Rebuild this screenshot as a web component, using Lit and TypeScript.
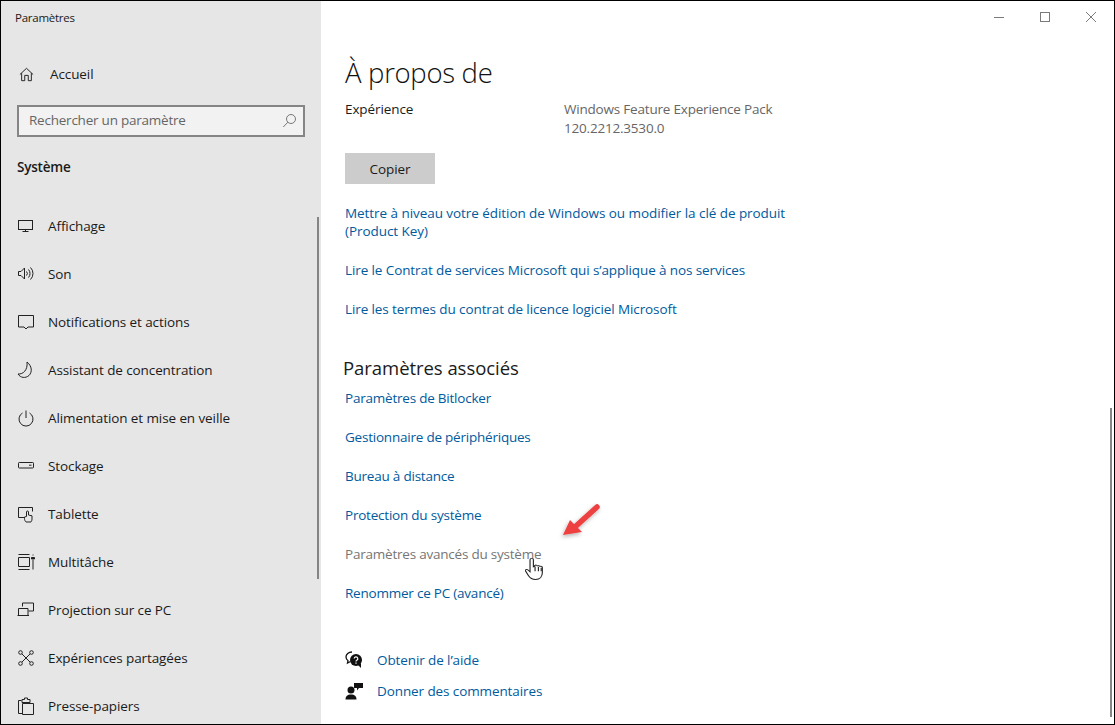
import { LitElement, html, css, svg } from "lit";
import { customElement } from "lit/decorators.js";

const navIcons: Record<string, unknown> = {
  monitor: svg`<rect x="1.500" y="3.500" width="14" height="9"/><path d="M8.500 12.500v2M5.500 14.500h6"/>`,
  sound: svg`<path d="M1.500 6.500h2.500l3.500-3.500v11l-3.500-3.500h-2.500z"/><path d="M9.500 6.500a3 3 0 0 1 0 4M11.500 4.500a6 6 0 0 1 0 8M13.500 2.500a8.500 8.500 0 0 1 0 12"/>`,
  note: svg`<path d="M1.500 2.500h15v11.500h-5.500l-2 2-2-2h-5.500z"/>`,
  moon: svg`<path d="M10 1C15 5 15.500 11 12 14.500C8.500 17.500 3.500 17 1 13C6 13.500 11 9 10 1z"/>`,
  power: svg`<path d="M5.500 4a7 7 0 1 0 7 0M9 1.500v7.500"/>`,
  storage: svg`<rect x="1.500" y="5.500" width="15" height="5.500" rx="0.800"/><path d="M12 8.200h2.500"/>`,
  tablet: svg`<path d="M8 12.500h-6.500v-10h14v4"/><path d="M9 17c-1-1-1.500-2-1.500-3.500v-1.500l2-.5v-4.500a1 1 0 0 1 2 0v3l3.500.8v3.200c0 1.500-.5 2-1 3z"/>`,
  multi: svg`<path d="M1.500 1.500h11M1.500 16.500h11M1.500 4.500v9h11v-9zM16 1.500v1M16 7v9.500"/><path d="M14.500 4.500h3v1.500h-3z" fill="currentColor"/>`,
  project: svg`<path d="M5.500 5.500v-3.500h11v8h-5"/><path d="M1.500 14.500v-7h9.500v7M.5 14.500h11.500"/>`,
  shared: svg`<circle cx="3.500" cy="3.500" r="1.800"/><circle cx="14.500" cy="3.500" r="1.800"/><circle cx="3.500" cy="14.500" r="1.800"/><circle cx="14.500" cy="14.500" r="1.800"/><path d="M5 5l8 8M13 5l-8 8"/>`,
  clip: svg`<path d="M4.500 3.500h-3v13h4M5 2.500h2.500v-1.500h3v1.500h2.500v3h-8z"/><path d="M5.500 6.500h11v11h-11z"/>`,
};

const nav: [string, string][] = [
  ["monitor", "Affichage"],
  ["sound", "Son"],
  ["note", "Notifications et actions"],
  ["moon", "Assistant de concentration"],
  ["power", "Alimentation et mise en veille"],
  ["storage", "Stockage"],
  ["tablet", "Tablette"],
  ["multi", "Multitâche"],
  ["project", "Projection sur ce PC"],
  ["shared", "Expériences partagées"],
  ["clip", "Presse-papiers"],
];

const related: [string, boolean][] = [
  ["Paramètres de Bitlocker", false],
  ["Gestionnaire de périphériques", false],
  ["Bureau à distance", false],
  ["Protection du système", false],
  ["Paramètres avancés du système", true],
  ["Renommer ce PC (avancé)", false],
];

@customElement("app-root")
export class AppRoot extends LitElement {
  static styles = css`
    :host {
      display: block;
      width: 1115px;
      height: 725px;
      background: #fff;
      font-family: "Open Sans", "Noto Sans", sans-serif;
      font-size: 13.500px;
      letter-spacing: -0.100px;
      color: #1a1a1a;
    }
    .window {
      position: relative;
      box-sizing: border-box;
      width: 1115px;
      height: 725px;
      border: 1px solid #000;
      display: flex;
      overflow: hidden;
      background: #fff;
    }
    .side {
      width: 320px;
      flex: none;
      background: #e6e6e6;
      display: flex;
      flex-direction: column;
      position: relative;
      overflow: hidden;
    }
    .side > * {
      flex: none;
    }
    .app-title {
      font-size: 11.500px;
      line-height: 16px;
      margin: 9px 0 0 14px;
      letter-spacing: -0.250px;
    }
    .home {
      display: flex;
      align-items: center;
      height: 24px;
      margin: 36px 0 0 18px;
      gap: 16px;
    }
    .home svg {
      width: 15px;
      height: 15px;
      fill: none;
      stroke: #222;
      stroke-width: 1.100;
    }
    .search {
      box-sizing: border-box;
      width: 288px;
      height: 32px;
      margin: 19px 0 0 16px;
      border: 2px solid #858585;
      background: #f2f2f2;
      display: flex;
      align-items: center;
      justify-content: space-between;
      padding: 0 6px 2px 10px;
      color: #666;
      letter-spacing: -0.230px;
    }
    .search svg {
      width: 15px;
      height: 15px;
      fill: none;
      stroke: #777;
      stroke-width: 1;
    }
    .section {
      font-weight: 600;
      line-height: 20px;
      margin: 20px 0 0 16px;
      letter-spacing: -0.200px;
    }
    .nav {
      margin-top: 25px;
      display: flex;
      flex-direction: column;
    }
    .nav-item {
      height: 48px;
      flex: none;
      display: flex;
      align-items: center;
      padding-left: 16px;
      gap: 13px;
    }
    .nav-item svg {
      width: 18px;
      height: 18px;
      flex: none;
      fill: none;
      stroke: #222;
      stroke-width: 1;
    }
    .side-scroll {
      position: absolute;
      left: 316px;
      top: 216px;
      width: 2px;
      height: 362px;
      background: #858585;
    }
    .main {
      flex: 1;
      position: relative;
      padding-left: 24px;
      min-width: 0;
    }
    .controls {
      position: absolute;
      top: 0;
      right: 0;
      display: flex;
    }
    .controls span {
      width: 46px;
      height: 32px;
      display: flex;
      align-items: center;
      justify-content: center;
    }
    .controls svg {
      width: 12px;
      height: 12px;
      fill: none;
      stroke: #7a7a7a;
      stroke-width: 1;
    }
    h1 {
      margin: 52px 0 0;
      font-size: 27.500px;
      font-weight: 300;
      line-height: 40px;
      letter-spacing: -0.300px;
      color: #111;
    }
    .info {
      display: flex;
      margin-top: 7px;
      line-height: 19px;
    }
    .info .key {
      width: 219px;
    }
    .info .val {
      color: #666;
      letter-spacing: -0.200px;
    }
    button {
      display: block;
      width: 90px;
      height: 31px;
      margin-top: 15px;
      border: none;
      background: #cccccc;
      font: inherit;
      letter-spacing: inherit;
      color: #1a1a1a;
      padding: 0;
    }
    .link {
      color: #005a9e;
      line-height: 18px;
      display: block;
    }
    .links {
      display: flex;
      flex-direction: column;
      gap: 21px;
      margin-top: 20px;
      width: 450px;
      letter-spacing: -0.100px;
    }
    .links .wide {
      letter-spacing: -0.060px;
    }
    h2 {
      margin: 37px 0 0 -2px;
      font-size: 18.500px;
      font-weight: 400;
      line-height: 26px;
      letter-spacing: -0.050px;
      color: #1a1a1a;
    }
    .related {
      display: flex;
      flex-direction: column;
      gap: 21px;
      margin-top: 8px;
      letter-spacing: -0.220px;
    }
    .dim {
      color: #767676;
    }
    .support {
      display: flex;
      flex-direction: column;
      gap: 13px;
      margin-top: 49px;
    }
    .support div {
      display: flex;
      align-items: center;
      gap: 14px;
    }
    .support svg {
      width: 18px;
      height: 18px;
      flex: none;
    }
    .main-scroll {
      position: absolute;
      right: 2px;
      top: 407px;
      width: 2px;
      height: 309px;
      background: #858585;
    }
    .arrow {
      position: absolute;
      left: 556px;
      top: 500px;
      width: 46px;
      height: 42px;
      overflow: visible;
    }
    .cursor {
      position: absolute;
      left: 524px;
      top: 556px;
      width: 19px;
      height: 24px;
    }
  `;

  render() {
    return html`
      <div class="window">
        <aside class="side">
          <div class="app-title">Paramètres</div>
          <div class="home">
            <svg viewBox="0 0 17 17"><path d="M1 8.500l7.500-7 7.500 7M3 7v8.500h3.500v-6h4v6h3.500v-8.500"/></svg>
            <span>Accueil</span>
          </div>
          <div class="search">
            <span>Rechercher un paramètre</span>
            <svg viewBox="0 0 15 15"><circle cx="9" cy="6" r="4.500"/><path d="M5.800 9.200l-4.500 4.800"/></svg>
          </div>
          <div class="section">Système</div>
          <nav class="nav">
            ${nav.map(
              ([icon, label]) => html`
                <div class="nav-item">
                  <svg viewBox="0 0 18 18">${navIcons[icon]}</svg>
                  <span>${label}</span>
                </div>
              `
            )}
          </nav>
          <div class="side-scroll"></div>
        </aside>
        <main class="main">
          <div class="controls">
            <span><svg viewBox="0 0 12 12"><path d="M1 6.500h10"/></svg></span>
            <span><svg viewBox="0 0 12 12"><rect x="1.500" y="1.500" width="9" height="9"/></svg></span>
            <span><svg viewBox="0 0 12 12"><path d="M1 1l10 10M11 1l-10 10"/></svg></span>
          </div>
          <h1>À propos de</h1>
          <div class="info">
            <div class="key">Expérience</div>
            <div class="val">Windows Feature Experience Pack<br />120.2212.3530.0</div>
          </div>
          <button>Copier</button>
          <div class="links">
            <a class="link wide">Mettre à niveau votre édition de Windows ou modifier la clé de produit (Product Key)</a>
            <a class="link">Lire le Contrat de services Microsoft qui s’applique à nos services</a>
            <a class="link">Lire les termes du contrat de licence logiciel Microsoft</a>
          </div>
          <h2>Paramètres associés</h2>
          <div class="related">
            ${related.map(
              ([label, dim]) => html`<a class="link ${dim ? "dim" : ""}">${label}</a>`
            )}
          </div>
          <div class="support">
            <div>
              <svg viewBox="0 0 18 18">
                <path d="M7 1C3.500 1 1 3.300 1 6c0 1.500.8 2.800 2 3.700L2.500 12l3-1.500" fill="none" stroke="#111" stroke-width="1.300"/>
                <circle cx="11" cy="9" r="6" fill="#111"/>
                <path d="M13 14l3 3v-5z" fill="#111"/>
                <path d="M9.200 7.500a1.800 1.800 0 1 1 2.600 1.700c-.6.300-.8.600-.8 1.300M11 11.500v1.200" fill="none" stroke="#fff" stroke-width="1.200"/>
              </svg>
              <a class="link">Obtenir de l’aide</a>
            </div>
            <div>
              <svg viewBox="0 0 18 18">
                <circle cx="6" cy="8" r="3.500" fill="#111"/>
                <path d="M0.500 17.500c0-3.500 2-5 5.500-5s5.500 1.500 5.500 5z" fill="#111"/>
                <path d="M9 1h9v5h-4l-2 2.500v-2.500h-3z" fill="#111"/>
              </svg>
              <a class="link">Donner des commentaires</a>
            </div>
          </div>
          <div class="main-scroll"></div>
        </main>
        <svg class="arrow" viewBox="0 0 46 42">
          <defs>
            <filter id="s" x="-30%" y="-30%" width="160%" height="160%">
              <feDropShadow dx="-1" dy="2" stdDeviation="2" flood-color="#000" flood-opacity="0.300" />
            </filter>
          </defs>
          <g filter="url(#s)">
            <path d="M40 6 L19 25" stroke="#ee4040" stroke-width="5.500" stroke-linecap="round"/>
            <path d="M6 34 L13 19 L25 31 Z" fill="#ee4040"/>
          </g>
        </svg>
        <svg class="cursor" viewBox="0 0 17 27" preserveAspectRatio="none">
          <path d="M6 1.500c1 0 1.500.6 1.500 1.500v8l1.200-.5v-1c1-.8 2-.5 2.300.5 1-.6 2-.3 2.300.6 1-.5 2.200 0 2.200 1.200v6c0 4-2 7.500-6 7.500-3.500 0-5-1.500-6.500-4.500l-2.500-5c-.5-1.200 1-2.500 2.200-1.200l1.800 2v-13.600c0-.9.500-1.500 1.500-1.500z" fill="#fff" stroke="#222" stroke-width="1"/>
          <path d="M9 11v5M12 11v5M14.500 12v4" stroke="#222" stroke-width="1" fill="none"/>
        </svg>
      </div>
    `;
  }
}
